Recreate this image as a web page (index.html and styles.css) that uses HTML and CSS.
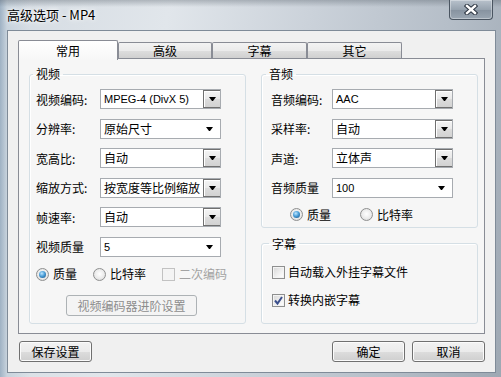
FILE: index.html
```html
<!DOCTYPE html>
<html lang="zh-CN">
<head>
    <meta charset="UTF-8">
    <title>高级选项 - MP4</title>
    <link rel="stylesheet" href="styles.css">
</head>
<body>
    <div class="window">
        <div class="titlebar">
            <span class="title">高级选项 - MP4</span>
            <span class="close-btn">
                <svg width="14" height="11" viewBox="0 0 14 11">
                    <path d="M3 2 L11 9 M11 2 L3 9" stroke="#2b3440" stroke-width="4.4" stroke-linecap="square"/>
                    <path d="M3 2 L11 9 M11 2 L3 9" stroke="#fff" stroke-width="2.4" stroke-linecap="square"/>
                </svg>
            </span>
        </div>

        <div class="client">
            <!-- 选项卡 -->
            <div class="tabs">
                <div class="tab active">常用</div>
                <div class="tab w94">高级</div>
                <div class="tab">字幕</div>
                <div class="tab">其它</div>
            </div>

            <div class="page">
                <fieldset class="group video">
                    <legend>视频</legend>
                    <div class="fields">
                        <label>视频编码:</label>
                        <div class="combo"><span class="latin">MPEG-4 (DivX 5)</span><i class="drop"></i></div>
                        <label>分辨率:</label>
                        <div class="combo edit"><span>原始尺寸</span><i class="drop"></i></div>
                        <label>宽高比:</label>
                        <div class="combo"><span>自动</span><i class="drop"></i></div>
                        <label>缩放方式:</label>
                        <div class="combo"><span>按宽度等比例缩放</span><i class="drop"></i></div>
                        <label>帧速率:</label>
                        <div class="combo"><span>自动</span><i class="drop"></i></div>
                        <label>视频质量</label>
                        <div class="combo edit"><span class="latin">5</span><i class="drop"></i></div>
                    </div>
                    <div class="options">
                        <span class="opt"><i class="radio checked"></i>质量</span>
                        <span class="opt"><i class="radio"></i>比特率</span>
                        <span class="opt disabled"><i class="check"></i>二次编码</span>
                    </div>
                    <button class="btn advanced" disabled>视频编码器进阶设置</button>
                </fieldset>

                <div class="right-col">
                    <fieldset class="group audio">
                        <legend>音频</legend>
                        <div class="fields">
                            <label>音频编码:</label>
                            <div class="combo"><span class="latin">AAC</span><i class="drop"></i></div>
                            <label>采样率:</label>
                            <div class="combo"><span>自动</span><i class="drop"></i></div>
                            <label>声道:</label>
                            <div class="combo"><span>立体声</span><i class="drop"></i></div>
                            <label>音频质量</label>
                            <div class="combo edit"><span class="latin">100</span><i class="drop"></i></div>
                        </div>
                        <div class="options">
                            <span class="opt"><i class="radio checked"></i>质量</span>
                            <span class="opt"><i class="radio"></i>比特率</span>
                        </div>
                    </fieldset>

                    <fieldset class="group subtitle">
                        <legend>字幕</legend>
                        <div class="checks">
                            <span class="opt"><i class="check"></i>自动载入外挂字幕文件</span>
                            <span class="opt">
                                <i class="check">
                                    <svg width="11" height="11" viewBox="0 0 11 11">
                                        <path d="M2 5.5 L4.5 8.5 L9 2" fill="none" stroke="#3b4f8c" stroke-width="2"/>
                                    </svg>
                                </i>转换内嵌字幕
                            </span>
                        </div>
                    </fieldset>
                </div>
            </div>

            <div class="actions">
                <button class="btn save">保存设置</button>
                <button class="btn">确定</button>
                <button class="btn">取消</button>
            </div>
        </div>
    </div>
</body>
</html>
```

FILE: styles.css
```css
* {
    box-sizing: border-box;
}
body {
    margin: 0;
    font-family: "Noto Sans CJK SC", "Liberation Sans", sans-serif;
    font-size: 12px;
    color: #000;
}
.window {
    width: 501px;
    height: 377px;
    padding: 0 5px 0 7px;
    overflow: hidden;
    background:
        linear-gradient(to bottom, rgba(80, 90, 100, 0.35), rgba(80, 90, 100, 0) 7px) top / 100% 8px no-repeat,
        linear-gradient(to right, #9fb2c4 0, #c8d3dd 7px, rgba(200, 211, 221, 0) 30px) left / 40px 100% no-repeat,
        linear-gradient(100deg, #d4dbe2 0%, #e1e6eb 30%, #cbd2da 55%, #b5bec8 80%, #9ea8b3 100%);
}

/* 标题栏 */
.titlebar {
    height: 30px;
    display: flex;
    align-items: flex-start;
}
.title {
    margin-top: 7px;
    font-size: 13px;
    line-height: 16px;
    text-shadow: 0 0 6px #fff, 0 0 3px #fff;
}
.close-btn {
    margin-left: auto;
    margin-right: 3px;
    width: 44px;
    height: 20px;
    border: 1px solid #4a5561;
    border-top: none;
    border-radius: 0 0 4px 4px;
    background: linear-gradient(#b8c2cc, #97a3af 50%, #86929f 51%, #9aa6b2);
    box-shadow: inset 0 0 0 1px rgba(255, 255, 255, 0.35);
    display: flex;
    align-items: center;
    justify-content: center;
}

/* 客户区 */
.client {
    height: 343px;
    border: 1px solid #7f8b98;
    background: #f0f0f0;
    padding: 8px 10px 0 10px;
}
.tabs {
    display: flex;
    align-items: flex-end;
    height: 20px;
    position: relative;
    z-index: 1;
}
.tab {
    width: 95px;
    height: 16px;
    margin-bottom: 1px;
    border: 1px solid #898c95;
    border-bottom: none;
    border-radius: 2px 2px 0 0;
    background: linear-gradient(#f3f3f3, #ebebeb 50%, #dedede 51%, #d0d0d0);
    text-align: center;
    line-height: 15px;
}
.tab.w94 {
    width: 94px;
}
.tab.active {
    width: 100px;
    height: 20px;
    margin-bottom: -1px;
    background: linear-gradient(#fff, #f7f7f7);
    line-height: 19px;
}
.page {
    height: 276px;
    margin-top: -1px;
    border: 1px solid #898c95;
    background: #f6f6f6;
    padding: 8px 6px 9px 10px;
    display: grid;
    grid-template-columns: 217px 217px;
    column-gap: 15px;
}

/* 分组框 */
.group {
    margin: 0;
    min-width: 0;
    border: 1px solid #d5dfe5;
    border-radius: 3px;
    box-shadow: inset 1px 1px 0 #fff;
    padding: 8px 6px 0 6px;
}
.group legend {
    padding: 0 3px;
    margin-left: -3px;
    line-height: 14px;
}
.fields {
    display: grid;
    grid-template-columns: 64px 121px;
    grid-auto-rows: 20px;
    row-gap: 9.5px;
    align-items: center;
}
.audio {
    padding: 8px 9px 5px 9px;
}
.audio legend {
    margin-left: -5px;
}
.audio .fields {
    grid-template-columns: 61px 121px;
}
.right-col {
    display: flex;
    flex-direction: column;
    gap: 9px;
}
.subtitle {
    flex: 1;
    padding: 15px 10px 0 10px;
}

/* 下拉框 */
.combo {
    height: 20px;
    border: 1px solid #a7abb0;
    background: #fff;
    display: flex;
    align-items: center;
    white-space: nowrap;
    overflow: hidden;
}
.combo span {
    flex: 1;
    padding-left: 3px;
    line-height: 16px;
    overflow: hidden;
}
.combo .latin {
    font-family: "Liberation Sans", sans-serif;
    font-size: 11px;
}
.drop {
    width: 17px;
    height: 18px;
    flex: none;
    border: 1px solid #707070;
    border-right: none;
    background: linear-gradient(#f4f4f4, #e9e9e9 50%, #dcdcdc 51%, #d2d2d2);
    box-shadow: inset 1px 1px 0 #fff;
    display: flex;
    align-items: center;
    justify-content: center;
}
.drop::after {
    content: "";
    width: 1px;
    height: 0;
    border-top: 4px solid #000;
    border-left: 3px solid transparent;
    border-right: 3px solid transparent;
}
.combo.edit .drop {
    border: none;
    background: none;
    box-shadow: none;
    margin-right: 2px;
}

/* 单选、复选 */
.options {
    display: flex;
    gap: 16px;
    height: 14px;
    margin-top: 10.5px;
    align-items: center;
}
.audio .options {
    margin-top: 10px;
    padding-left: 19px;
    gap: 29px;
}
.opt {
    display: inline-flex;
    align-items: center;
    gap: 4px;
    line-height: 14px;
    white-space: nowrap;
}
.opt.disabled {
    color: #a3a3a3;
}
.radio {
    width: 13px;
    height: 13px;
    border-radius: 50%;
    border: 1px solid #8e8f8f;
    background: radial-gradient(circle at 50% 45%, #fff 0, #ebebeb 55%, #d0d0d0 100%);
    display: flex;
    align-items: center;
    justify-content: center;
}
.radio.checked::after {
    content: "";
    width: 7px;
    height: 7px;
    border-radius: 50%;
    background: radial-gradient(circle at 40% 35%, #bfe6ff 0, #4b9fd8 45%, #1c5a8f 90%);
}
.check {
    width: 13px;
    height: 13px;
    border: 1px solid #8e8f8f;
    background: linear-gradient(135deg, #d6d6d6, #f6f6f6 70%, #fff);
    box-shadow: inset 0 0 0 1px #f4f4f4;
    display: flex;
    align-items: center;
    justify-content: center;
}
.disabled .check {
    border-color: #c2c2c2;
    background: #f4f4f4;
}
.checks {
    display: flex;
    flex-direction: column;
    gap: 15px;
}
.checks .opt {
    height: 13px;
    gap: 3px;
}

/* 按钮 */
.btn {
    width: 73px;
    height: 21px;
    padding: 0;
    font: inherit;
    color: #000;
    border: 1px solid #707070;
    border-radius: 3px;
    background: linear-gradient(#f2f2f2, #ebebeb 50%, #dddddd 51%, #cfcfcf);
    box-shadow: inset 0 0 0 1px #fbfbfb;
    line-height: 18px;
}
.btn:disabled {
    color: #8d8d8d;
    border-color: #adb2b5;
    background: #f4f4f4;
    box-shadow: none;
}
.advanced {
    width: 131px;
    margin: 14px 0 0 30px;
}
.actions {
    display: flex;
    gap: 7px;
    margin-top: 7px;
}
.actions .save {
    margin-left: 1px;
    margin-right: auto;
}
```
